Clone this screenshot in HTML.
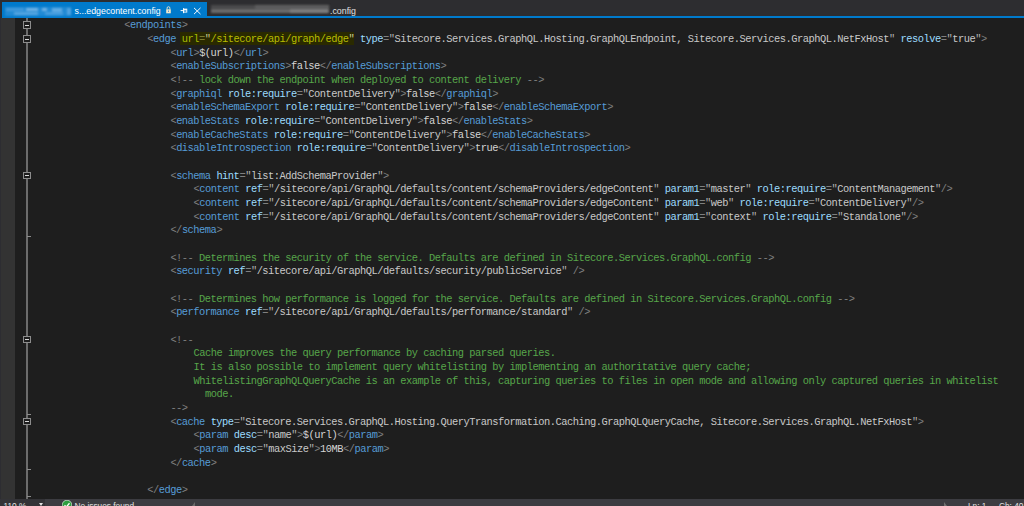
<!DOCTYPE html>
<html><head><meta charset="utf-8">
<style>
*{margin:0;padding:0;box-sizing:border-box}
html,body{width:1024px;height:506px;overflow:hidden;background:#1e1e1e}
body{position:relative;font-family:"Liberation Mono",monospace}
.tabs{position:absolute;left:0;top:0;width:1024px;height:18px;background:#2d2d30}
.tabline{position:absolute;left:1.5px;top:16px;width:1023px;height:2px;background:#007acc}
.tab1{position:absolute;left:1.5px;top:2px;width:205px;height:15px;background:#007acc}
.tabtxt{position:absolute;font-family:"Liberation Sans",sans-serif;font-size:8.8px;line-height:15px;white-space:pre}
.blur{position:absolute;filter:blur(0.8px)}
.margin{position:absolute;left:1px;top:18px;width:14px;height:481px;background:#333333}
.fline{position:absolute;left:26px;top:18px;width:2px;height:481px;background:#6c6c6c}
.fbox{position:absolute;left:23px;width:8px;height:7.6px;border:1px solid #8c8c8c;background:#1e1e1e}
.fbox::after{content:"";position:absolute;left:1px;top:2.6px;width:4px;height:1px;background:#d8d8d8}
.ftick{position:absolute;left:27px;width:4px;height:1px;background:#8c8c8c}
.ln{position:absolute;white-space:pre;font-size:10.4px;letter-spacing:-0.487px;line-height:13.67px;height:13.67px}
b{font-weight:normal}
.d{color:#808080} .e{color:#569cd6} .a{color:#9cdcfe} .q{color:#b0b0b0} .v{color:#c8c8c8}
.t{color:#d4d4d4} .c{color:#57a64a} .hla{color:#a8bc00} .hle{color:#7a7a30} .hlq{color:#c8c890} .hlv{color:#b8bc00}
.hlbg{position:absolute;left:180.2px;top:31.67px;width:174px;height:13.67px;background:#2a2a00}
.status{position:absolute;left:0;top:498.7px;width:1024px;height:8px;background:#3c3c41}
.zoombox{position:absolute;left:0;top:498.7px;width:44.5px;height:8px;background:#333337}
.stxt{position:absolute;font-family:"Liberation Sans",sans-serif;font-size:8.3px;line-height:10px;white-space:pre;color:#e0e0e0}
</style></head><body>
<div class="tabs"></div>
<div class="tab1"></div>
<div class="tabline"></div>
<div class="blur" style="left:5px;top:7px;width:66px;height:8.5px;background:rgba(150,195,240,0.22)"></div>
<div class="blur" style="left:6px;top:8px;width:18px;height:3px;background:rgba(170,210,245,0.24)"></div>
<div class="blur" style="left:26px;top:7.5px;width:12px;height:3.5px;background:rgba(210,230,250,0.47)"></div>
<div class="blur" style="left:14px;top:11.5px;width:24px;height:3px;background:rgba(190,220,250,0.34)"></div>
<div class="blur" style="left:42px;top:7.5px;width:5px;height:3.5px;background:rgba(210,230,250,0.47)"></div>
<div class="blur" style="left:52px;top:7.5px;width:10px;height:4px;background:rgba(190,220,250,0.41)"></div>
<div class="blur" style="left:45px;top:12px;width:18px;height:3px;background:rgba(180,215,250,0.27)"></div>
<div class="blur" style="left:67px;top:7.5px;width:4px;height:7px;background:rgba(180,215,250,0.34)"></div>
<div class="tabtxt" style="left:74.6px;top:4.1px;color:#fff">s...edgecontent.config</div>
<svg style="position:absolute;left:166px;top:6px" width="5" height="8" viewBox="0 0 5 8"><path d="M1.1 3.4V2.1a1.4 1.4 0 0 1 2.8 0v1.3" fill="none" stroke="#f0e6c8" stroke-width="0.9"/><rect x="0.2" y="3.3" width="4.6" height="4" fill="#f0e6c8"/><rect x="2" y="4.6" width="1" height="1.2" fill="#3a80c8"/></svg>
<svg style="position:absolute;left:180px;top:7px" width="8" height="8" viewBox="0 0 8 8"><path d="M0.6 3.6H3.6M3.6 1.2V6.2" fill="none" stroke="#fff" stroke-width="1"/><rect x="3.6" y="2.1" width="3.2" height="3" fill="none" stroke="#fff" stroke-width="0.9"/><rect x="3.6" y="2.1" width="3.2" height="1.3" fill="#fff"/></svg>
<svg style="position:absolute;left:193px;top:6.5px" width="8.5" height="8" viewBox="0 0 8.5 8"><path d="M1 0.9L7.5 7.1M7.5 0.9L1 7.1" fill="none" stroke="#f4f8fc" stroke-width="1"/></svg>
<div class="blur" style="left:211px;top:4.5px;width:118px;height:4px;background:rgba(110,110,110,0.45)"></div>
<div class="blur" style="left:255px;top:4.5px;width:74px;height:4px;background:rgba(130,130,130,0.35)"></div>
<div class="blur" style="left:211px;top:8.8px;width:118px;height:4.2px;background:rgba(150,150,150,0.6)"></div>
<div class="blur" style="left:290px;top:8.8px;width:38px;height:4.2px;background:rgba(170,170,170,0.3)"></div>
<div class="tabtxt" style="left:330px;top:4.1px;color:#e0e0e0">.config</div>
<div class="margin"></div>
<div style="position:absolute;left:0;top:0;width:1px;height:499px;background:#2d2d32"></div>
<div class="hlbg"></div>
<div class="fline"></div><div class="fbox" style="top:21.23px"></div><div class="fbox" style="top:34.91px"></div><div class="fbox" style="top:171.61px"></div><div class="fbox" style="top:335.64px"></div><div class="fbox" style="top:417.66px"></div><div class="ftick" style="top:236.22px"></div><div class="ftick" style="top:413.93px"></div><div class="ftick" style="top:468.61px"></div><div class="ftick" style="top:495.95px"></div>
<div class="ln" style="top:19.30px;left:124.36px"><b class="d">&lt;</b><b class="e">endpoints</b><b class="d">&gt;</b></div><div class="ln" style="top:32.97px;left:147.37px"><b class="d">&lt;</b><b class="e">edge</b> <b class="hla">url</b><b class="hle">=</b><b class="hlq">&quot;</b><b class="hlv">/sitecore/api/graph/edge</b><b class="hlq">&quot;</b> <b class="a">type</b><b class="d">=</b><b class="q">&quot;</b><b class="v">Sitecore.Services.GraphQL.Hosting.GraphQLEndpoint, Sitecore.Services.GraphQL.NetFxHost</b><b class="q">&quot;</b> <b class="a">resolve</b><b class="d">=</b><b class="q">&quot;</b><b class="v">true</b><b class="q">&quot;</b><b class="d">&gt;</b></div><div class="ln" style="top:46.64px;left:170.38px"><b class="d">&lt;</b><b class="e">url</b><b class="d">&gt;</b><b class="t">$(url)</b><b class="d">&lt;/</b><b class="e">url</b><b class="d">&gt;</b></div><div class="ln" style="top:60.31px;left:170.38px"><b class="d">&lt;</b><b class="e">enableSubscriptions</b><b class="d">&gt;</b><b class="t">false</b><b class="d">&lt;/</b><b class="e">enableSubscriptions</b><b class="d">&gt;</b></div><div class="ln" style="top:73.98px;left:170.38px"><b class="d">&lt;!--</b><b class="c"> lock down the endpoint when deployed to content delivery </b><b class="d">--&gt;</b></div><div class="ln" style="top:87.65px;left:170.38px"><b class="d">&lt;</b><b class="e">graphiql</b> <b class="a">role:require</b><b class="d">=</b><b class="q">&quot;</b><b class="v">ContentDelivery</b><b class="q">&quot;</b><b class="d">&gt;</b><b class="t">false</b><b class="d">&lt;/</b><b class="e">graphiql</b><b class="d">&gt;</b></div><div class="ln" style="top:101.32px;left:170.38px"><b class="d">&lt;</b><b class="e">enableSchemaExport</b> <b class="a">role:require</b><b class="d">=</b><b class="q">&quot;</b><b class="v">ContentDelivery</b><b class="q">&quot;</b><b class="d">&gt;</b><b class="t">false</b><b class="d">&lt;/</b><b class="e">enableSchemaExport</b><b class="d">&gt;</b></div><div class="ln" style="top:114.99px;left:170.38px"><b class="d">&lt;</b><b class="e">enableStats</b> <b class="a">role:require</b><b class="d">=</b><b class="q">&quot;</b><b class="v">ContentDelivery</b><b class="q">&quot;</b><b class="d">&gt;</b><b class="t">false</b><b class="d">&lt;/</b><b class="e">enableStats</b><b class="d">&gt;</b></div><div class="ln" style="top:128.66px;left:170.38px"><b class="d">&lt;</b><b class="e">enableCacheStats</b> <b class="a">role:require</b><b class="d">=</b><b class="q">&quot;</b><b class="v">ContentDelivery</b><b class="q">&quot;</b><b class="d">&gt;</b><b class="t">false</b><b class="d">&lt;/</b><b class="e">enableCacheStats</b><b class="d">&gt;</b></div><div class="ln" style="top:142.33px;left:170.38px"><b class="d">&lt;</b><b class="e">disableIntrospection</b> <b class="a">role:require</b><b class="d">=</b><b class="q">&quot;</b><b class="v">ContentDelivery</b><b class="q">&quot;</b><b class="d">&gt;</b><b class="t">true</b><b class="d">&lt;/</b><b class="e">disableIntrospection</b><b class="d">&gt;</b></div><div class="ln" style="top:156.00px;left:9.30px"></div><div class="ln" style="top:169.67px;left:170.38px"><b class="d">&lt;</b><b class="e">schema</b> <b class="a">hint</b><b class="d">=</b><b class="q">&quot;</b><b class="v">list:AddSchemaProvider</b><b class="q">&quot;</b><b class="d">&gt;</b></div><div class="ln" style="top:183.34px;left:193.40px"><b class="d">&lt;</b><b class="e">content</b> <b class="a">ref</b><b class="d">=</b><b class="q">&quot;</b><b class="v">/sitecore/api/GraphQL/defaults/content/schemaProviders/edgeContent</b><b class="q">&quot;</b> <b class="a">param1</b><b class="d">=</b><b class="q">&quot;</b><b class="v">master</b><b class="q">&quot;</b> <b class="a">role:require</b><b class="d">=</b><b class="q">&quot;</b><b class="v">ContentManagement</b><b class="q">&quot;</b><b class="d">/&gt;</b></div><div class="ln" style="top:197.01px;left:193.40px"><b class="d">&lt;</b><b class="e">content</b> <b class="a">ref</b><b class="d">=</b><b class="q">&quot;</b><b class="v">/sitecore/api/GraphQL/defaults/content/schemaProviders/edgeContent</b><b class="q">&quot;</b> <b class="a">param1</b><b class="d">=</b><b class="q">&quot;</b><b class="v">web</b><b class="q">&quot;</b> <b class="a">role:require</b><b class="d">=</b><b class="q">&quot;</b><b class="v">ContentDelivery</b><b class="q">&quot;</b><b class="d">/&gt;</b></div><div class="ln" style="top:210.68px;left:193.40px"><b class="d">&lt;</b><b class="e">content</b> <b class="a">ref</b><b class="d">=</b><b class="q">&quot;</b><b class="v">/sitecore/api/GraphQL/defaults/content/schemaProviders/edgeContent</b><b class="q">&quot;</b> <b class="a">param1</b><b class="d">=</b><b class="q">&quot;</b><b class="v">context</b><b class="q">&quot;</b> <b class="a">role:require</b><b class="d">=</b><b class="q">&quot;</b><b class="v">Standalone</b><b class="q">&quot;</b><b class="d">/&gt;</b></div><div class="ln" style="top:224.35px;left:170.38px"><b class="d">&lt;/</b><b class="e">schema</b><b class="d">&gt;</b></div><div class="ln" style="top:238.02px;left:9.30px"></div><div class="ln" style="top:251.69px;left:170.38px"><b class="d">&lt;!--</b><b class="c"> Determines the security of the service. Defaults are defined in Sitecore.Services.GraphQL.config </b><b class="d">--&gt;</b></div><div class="ln" style="top:265.36px;left:170.38px"><b class="d">&lt;</b><b class="e">security</b> <b class="a">ref</b><b class="d">=</b><b class="q">&quot;</b><b class="v">/sitecore/api/GraphQL/defaults/security/publicService</b><b class="q">&quot;</b> <b class="d">/&gt;</b></div><div class="ln" style="top:279.03px;left:9.30px"></div><div class="ln" style="top:292.70px;left:170.38px"><b class="d">&lt;!--</b><b class="c"> Determines how performance is logged for the service. Defaults are defined in Sitecore.Services.GraphQL.config </b><b class="d">--&gt;</b></div><div class="ln" style="top:306.37px;left:170.38px"><b class="d">&lt;</b><b class="e">performance</b> <b class="a">ref</b><b class="d">=</b><b class="q">&quot;</b><b class="v">/sitecore/api/GraphQL/defaults/performance/standard</b><b class="q">&quot;</b> <b class="d">/&gt;</b></div><div class="ln" style="top:320.04px;left:9.30px"></div><div class="ln" style="top:333.71px;left:170.38px"><b class="d">&lt;!--</b></div><div class="ln" style="top:347.38px;left:193.40px"><b class="c">Cache improves the query performance by caching parsed queries.</b></div><div class="ln" style="top:361.05px;left:193.40px"><b class="c">It is also possible to implement query whitelisting by implementing an authoritative query cache;</b></div><div class="ln" style="top:374.72px;left:193.40px"><b class="c">WhitelistingGraphQLQueryCache is an example of this, capturing queries to files in open mode and allowing only captured queries in whitelist</b></div><div class="ln" style="top:388.39px;left:204.90px"><b class="c">mode.</b></div><div class="ln" style="top:402.06px;left:170.38px"><b class="d">--&gt;</b></div><div class="ln" style="top:415.73px;left:170.38px"><b class="d">&lt;</b><b class="e">cache</b> <b class="a">type</b><b class="d">=</b><b class="q">&quot;</b><b class="v">Sitecore.Services.GraphQL.Hosting.QueryTransformation.Caching.GraphQLQueryCache, Sitecore.Services.GraphQL.NetFxHost</b><b class="q">&quot;</b><b class="d">&gt;</b></div><div class="ln" style="top:429.40px;left:193.40px"><b class="d">&lt;</b><b class="e">param</b> <b class="a">desc</b><b class="d">=</b><b class="q">&quot;</b><b class="v">name</b><b class="q">&quot;</b><b class="d">&gt;</b><b class="t">$(url)</b><b class="d">&lt;/</b><b class="e">param</b><b class="d">&gt;</b></div><div class="ln" style="top:443.07px;left:193.40px"><b class="d">&lt;</b><b class="e">param</b> <b class="a">desc</b><b class="d">=</b><b class="q">&quot;</b><b class="v">maxSize</b><b class="q">&quot;</b><b class="d">&gt;</b><b class="t">10MB</b><b class="d">&lt;/</b><b class="e">param</b><b class="d">&gt;</b></div><div class="ln" style="top:456.74px;left:170.38px"><b class="d">&lt;/</b><b class="e">cache</b><b class="d">&gt;</b></div><div class="ln" style="top:470.41px;left:9.30px"></div><div class="ln" style="top:484.08px;left:147.37px"><b class="d">&lt;/</b><b class="e">edge</b><b class="d">&gt;</b></div>
<div class="status"></div>
<div class="zoombox"></div>
<div class="stxt" style="left:3.5px;top:500.6px">110 %</div>
<svg style="position:absolute;left:39.3px;top:503.3px" width="4" height="3"><path d="M0 0H4L2 3Z" fill="#e0e0e0"/></svg>
<svg style="position:absolute;left:62px;top:500px" width="10" height="10"><circle cx="5" cy="5" r="4.8" fill="#2e9e3e" stroke="#fff" stroke-width="0.6"/><path d="M2.5 5.2L4.3 7L7.5 3.3" fill="none" stroke="#fff" stroke-width="1.3"/></svg>
<div class="stxt" style="left:74.5px;top:500.6px">No issues found</div>
<div style="position:absolute;left:944px;top:501.8px;width:0;height:0;border-left:3.5px solid #707070;border-top:4.5px solid transparent"></div>
<div style="position:absolute;left:192.2px;top:501.8px;width:0;height:0;border-right:3.5px solid #6a6a6a;border-top:4.5px solid transparent"></div>
<div class="stxt" style="left:968px;top:500.6px">Ln: 1</div>
<div class="stxt" style="left:999px;top:500.6px">Ch: 40</div>
</body></html>
